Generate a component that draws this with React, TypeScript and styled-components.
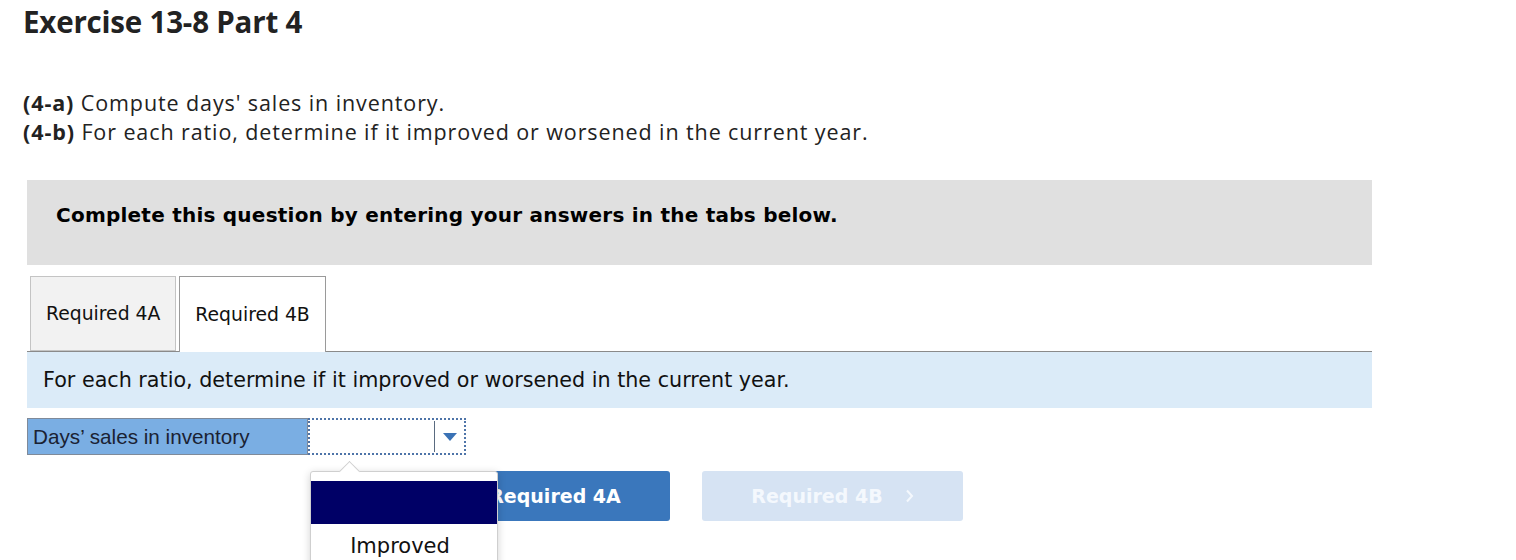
import React from "react";
import styled, { createGlobalStyle } from "styled-components";

const Global = createGlobalStyle`
  html, body { margin: 0; padding: 0; background: #fff; }
  body { font-family: "DejaVu Sans", Verdana, sans-serif; }
`;

const Page = styled.div`
  padding: 4px 23px 0 23px;
  width: 1500px;
  min-height: 560px;
  box-sizing: border-box;
  overflow: hidden;
`;

const Title = styled.h1`
  margin: 0;
  font-family: "Open Sans", "Lato", sans-serif;
  font-weight: 700;
  font-size: 29.5px;
  line-height: 36px;
  letter-spacing: -0.2px;
  color: #222;
`;

const Instructions = styled.div`
  margin-top: 48px;
  font-family: "Open Sans", "Lato", sans-serif;
  font-size: 21.5px;
  letter-spacing: 0.9px;
  line-height: 29px;
  color: #222;
`;

const Line = styled.div``;

const Strong = styled.b`
  font-weight: 700;
`;

const Panel = styled.div`
  margin-left: 4px;
  margin-top: 34px;
  width: 1345px;
`;

const Banner = styled.div`
  background: #e0e0e0;
  height: 85px;
  box-sizing: border-box;
  padding: 23px 29px 0 29px;
  font-weight: 700;
  font-size: 20px;
  letter-spacing: 0.23px;
  line-height: 24px;
  color: #000;
`;

const TabRow = styled.div`
  display: flex;
  gap: 3px;
  margin-top: 11px;
  padding-left: 3px;
  border-bottom: 1px solid #8a8a8a;
  height: 75px;
  align-items: flex-end;
`;

const Tab = styled.div<{ $active?: boolean }>`
  height: ${(p) => (p.$active ? "76px" : "75px")};
  margin-bottom: ${(p) => (p.$active ? "-1px" : "0")};
  box-sizing: border-box;
  padding: 0 15px;
  display: flex;
  align-items: center;
  font-size: 18.8px;
  color: #111;
  background: ${(p) => (p.$active ? "#fff" : "#f2f2f2")};
  border: 1px solid ${(p) => (p.$active ? "#9a9a9a" : "#c4c4c4")};
  border-bottom: ${(p) => (p.$active ? "none" : "1px solid #c4c4c4")};
`;

const Prompt = styled.div`
  background: #dbebf8;
  height: 56px;
  box-sizing: border-box;
  padding: 0 16px;
  display: flex;
  align-items: center;
  font-size: 20.7px;
  color: #111;
`;

const AnswerRow = styled.div`
  margin-top: 10px;
  display: flex;
  height: 37px;
`;

const LabelCell = styled.div`
  width: 281px;
  box-sizing: border-box;
  background: #7aaee3;
  border: 1px solid #7f8a99;
  padding-left: 5px;
  display: flex;
  align-items: center;
  font-family: "Liberation Sans", Arial, sans-serif;
  font-size: 20.7px;
  color: #1a2233;
`;

const SelectCell = styled.div`
  position: relative;
  width: 158px;
  box-sizing: border-box;
  border: 2px dotted #4e74a8;
  display: flex;
  background: #fff;
`;

const SelectValue = styled.div`
  flex: 1;
`;

const ArrowBox = styled.div`
  width: 29px;
  border-left: 1px solid #5a6b80;
  margin: 1px 0;
  display: flex;
  align-items: center;
  justify-content: center;
`;

const Popup = styled.div`
  position: absolute;
  left: 0px;
  top: 51px;
  width: 188px;
  height: 110px;
  box-sizing: border-box;
  background: #fff;
  border: 1px solid #cfcfcf;
  border-radius: 3px;
  box-shadow: 0 2px 8px rgba(0, 0, 0, 0.18);
  padding-top: 9px;
  z-index: 5;
`;

const Caret = styled.div`
  position: absolute;
  top: -8px;
  left: 31px;
  width: 14px;
  height: 14px;
  background: #fff;
  border-left: 1px solid #cfcfcf;
  border-top: 1px solid #cfcfcf;
  transform: rotate(45deg);
`;

const Option = styled.div<{ $selected?: boolean }>`
  height: ${(p) => (p.$selected ? "43px" : "44px")};
  background: ${(p) => (p.$selected ? "#000066" : "#fff")};
  color: #111;
  display: flex;
  align-items: center;
  justify-content: center;
  padding-right: 8px;
  font-size: 21px;
  position: relative;
`;

const NavRow = styled.div`
  display: flex;
  gap: 32px;
  margin-top: 16px;
  padding-left: 382px;
`;

const NavButton = styled.div<{ $disabled?: boolean }>`
  width: 261px;
  height: 50px;
  border-radius: 3px;
  background: ${(p) => (p.$disabled ? "#d6e3f3" : "#3a77bc")};
  color: ${(p) => (p.$disabled ? "#f4f8fd" : "#fff")};
  display: flex;
  align-items: center;
  justify-content: center;
  gap: 22px;
  font-weight: 700;
  font-size: 19px;
`;

const Chevron = ({ dir }: { dir: "left" | "right" }) => (
  <svg width="9" height="14" viewBox="0 0 9 14">
    <path
      d={dir === "right" ? "M2 1.5 L7 7 L2 12.5" : "M7 1.5 L2 7 L7 12.5"}
      fill="none"
      stroke="currentColor"
      strokeWidth="2"
    />
  </svg>
);

export default function App() {
  return (
    <>
      <Global />
      <Page>
        <Title>Exercise 13-8 Part 4</Title>
        <Instructions>
          <Line>
            <Strong>(4-a)</Strong> Compute days' sales in inventory.
          </Line>
          <Line>
            <Strong>(4-b)</Strong> For each ratio, determine if it improved or worsened in the current year.
          </Line>
        </Instructions>
        <Panel>
          <Banner>Complete this question by entering your answers in the tabs below.</Banner>
          <TabRow>
            <Tab>Required 4A</Tab>
            <Tab $active>Required 4B</Tab>
          </TabRow>
          <Prompt>For each ratio, determine if it improved or worsened in the current year.</Prompt>
          <AnswerRow>
            <LabelCell>Days’ sales in inventory</LabelCell>
            <SelectCell>
              <SelectValue />
              <ArrowBox>
                <svg width="14" height="8" viewBox="0 0 14 8">
                  <path d="M0 0 H14 L7 8 Z" fill="#3a72b5" />
                </svg>
              </ArrowBox>
              <Popup>
                <Caret />
                <Option $selected />
                <Option>Improved</Option>
              </Popup>
            </SelectCell>
          </AnswerRow>
          <NavRow>
            <NavButton>
              <Chevron dir="left" />
              Required 4A
            </NavButton>
            <NavButton $disabled>
              Required 4B
              <Chevron dir="right" />
            </NavButton>
          </NavRow>
        </Panel>
      </Page>
    </>
  );
}
